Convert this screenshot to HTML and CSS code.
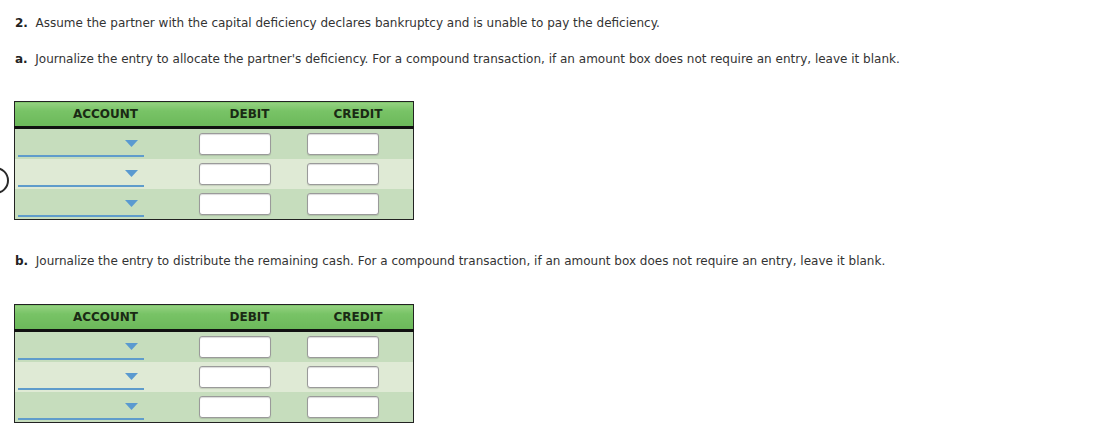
FILE: index.html
```html
<!DOCTYPE html>
<html>
<head>
<meta charset="utf-8">
<link rel="stylesheet" href="styles.css">
</head>
<body>
<div class="page">
  <span class="ring"></span>
  <p class="q q1"><b>2.</b>&nbsp; Assume the partner with the capital deficiency declares bankruptcy and is unable to pay the deficiency.</p>
  <p class="q q2"><b>a.</b>&nbsp; Journalize the entry to allocate the partner's deficiency. For a compound transaction, if an amount box does not require an entry, leave it blank.</p>
  <table class="journal">
    <thead>
      <tr><th class="c-acc">ACCOUNT</th><th class="c-deb">DEBIT</th><th class="c-cred">CREDIT</th></tr>
    </thead>
    <tbody>
      <tr class="odd"><td><div class="sel"><svg class="arr" width="13" height="7" viewBox="0 0 13 7"><path d="M0 0H13L6.5 7Z" fill="#5a9ad0"/></svg></div></td><td><div class="inp"></div></td><td><div class="inp"></div></td></tr>
      <tr class="even"><td><div class="sel"><svg class="arr" width="13" height="7" viewBox="0 0 13 7"><path d="M0 0H13L6.5 7Z" fill="#5a9ad0"/></svg></div></td><td><div class="inp"></div></td><td><div class="inp"></div></td></tr>
      <tr class="odd"><td><div class="sel"><svg class="arr" width="13" height="7" viewBox="0 0 13 7"><path d="M0 0H13L6.5 7Z" fill="#5a9ad0"/></svg></div></td><td><div class="inp"></div></td><td><div class="inp"></div></td></tr>
    </tbody>
  </table>
  <p class="q q3"><b>b.</b>&nbsp; Journalize the entry to distribute the remaining cash. For a compound transaction, if an amount box does not require an entry, leave it blank.</p>
  <table class="journal">
    <thead>
      <tr><th class="c-acc">ACCOUNT</th><th class="c-deb">DEBIT</th><th class="c-cred">CREDIT</th></tr>
    </thead>
    <tbody>
      <tr class="odd"><td><div class="sel"><svg class="arr" width="13" height="7" viewBox="0 0 13 7"><path d="M0 0H13L6.5 7Z" fill="#5a9ad0"/></svg></div></td><td><div class="inp"></div></td><td><div class="inp"></div></td></tr>
      <tr class="even"><td><div class="sel"><svg class="arr" width="13" height="7" viewBox="0 0 13 7"><path d="M0 0H13L6.5 7Z" fill="#5a9ad0"/></svg></div></td><td><div class="inp"></div></td><td><div class="inp"></div></td></tr>
      <tr class="odd"><td><div class="sel"><svg class="arr" width="13" height="7" viewBox="0 0 13 7"><path d="M0 0H13L6.5 7Z" fill="#5a9ad0"/></svg></div></td><td><div class="inp"></div></td><td><div class="inp"></div></td></tr>
    </tbody>
  </table>
</div>
</body>
</html>
```
FILE: styles.css
```css
html, body {
  margin: 0;
  padding: 0;
  background: #ffffff;
}
.page {
  position: relative;
  padding: 16px 0 0 14px;
  font-family: "DejaVu Sans", Verdana, sans-serif;
  font-size: 12px;
  color: #333333;
}
.q {
  margin: 0 0 0 1px;
  line-height: 14px;
  white-space: nowrap;
}
.q b {
  color: #222222;
}
.q2 {
  margin-top: 22px;
}
.q3 {
  margin-top: 34px;
}
.journal {
  border-collapse: collapse;
  width: 400px;
  border: 1px solid #222222;
  table-layout: fixed;
}
.q2 + .journal {
  margin-top: 35px;
}
.q3 + .journal {
  margin-top: 36px;
}
.journal th {
  height: 24px;
  padding: 0;
  font-size: 12px;
  font-weight: bold;
  color: #1a2a14;
  text-align: center;
  background: linear-gradient(#95d281 0%, #78c366 35%, #6bb85a 100%);
  border-bottom: 3px solid #111111;
}
.c-acc { width: 181px; }
.c-deb { width: 107px; }
.c-cred { width: 110px; }
.journal td {
  height: 30px;
  padding: 0 0 0 3px;
  vertical-align: middle;
}
.journal td:last-child {
  padding-left: 4px;
}
.odd { background: #c6ddbd; }
.even { background: #dfead5; }
.sel {
  position: relative;
  width: 126px;
  height: 22px;
  margin-top: 2px;
  border-bottom: 2px solid #5f9ccb;
}
.arr {
  position: absolute;
  right: 6px;
  top: 7px;
}
.inp {
  width: 70px;
  height: 20px;
  background: #ffffff;
  border: 1px solid #9a9a9a;
  border-radius: 3px;
  box-shadow: inset 0 1px 1px rgba(0,0,0,0.15), 0 1px 1px rgba(0,0,0,0.12);
}
.ring {
  position: absolute;
  left: -18px;
  top: 167px;
  width: 23px;
  height: 23px;
  border: 2px solid #2a2a2a;
  border-radius: 50%;
}
```
